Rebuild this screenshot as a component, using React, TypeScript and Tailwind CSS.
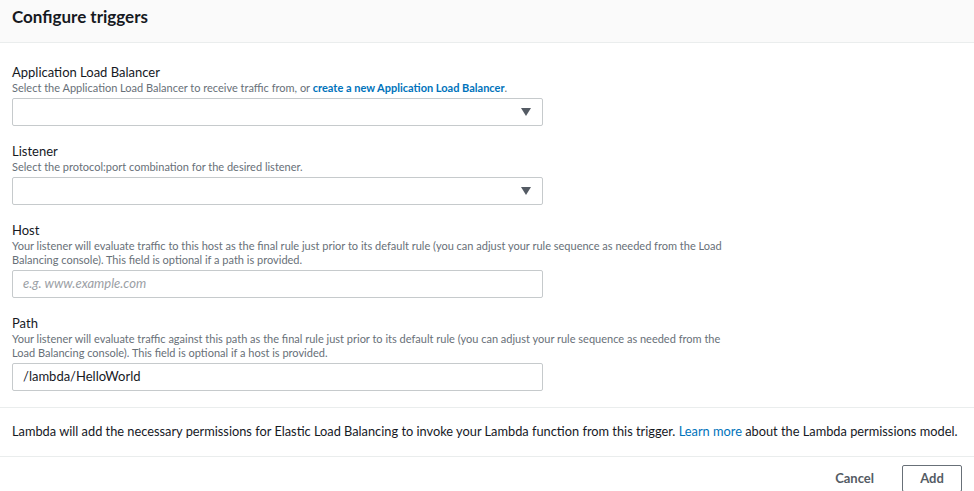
import React from 'react';

const font = { fontFamily: 'Lato, "Open Sans", "Liberation Sans", sans-serif' };

function Caret() {
  return (
    <svg width="10" height="8" viewBox="0 0 10 8" className="fill-[#545b64]">
      <path d="M0 0 L10 0 L5 8 Z" />
    </svg>
  );
}

function Field({
  label,
  children,
  desc,
}: {
  label: string;
  desc: React.ReactNode;
  children: React.ReactNode;
}) {
  return (
    <div className="flex flex-col">
      <div className="text-[13px] leading-[17px] text-[#16191f]">{label}</div>
      <div className="text-[11px] leading-[14px] text-[#687078] max-w-[712px]">{desc}</div>
      <div className="mt-[3px]">{children}</div>
    </div>
  );
}

function SelectBox() {
  return (
    <div className="w-[531px] h-[28px] border border-[#c6cacc] rounded-[2px] bg-white flex items-center justify-end pr-[11px]">
      <Caret />
    </div>
  );
}

function TextBox({ value, placeholder }: { value?: string; placeholder?: string }) {
  return (
    <div className="w-[531px] h-[28px] border border-[#c6cacc] rounded-[2px] bg-white flex items-center px-[10px] text-[13px]">
      {value ? (
        <span className="text-[#16191f]">{value}</span>
      ) : (
        <span className="italic text-[#9ba0a5]">{placeholder}</span>
      )}
    </div>
  );
}

export default function App() {
  return (
    <div style={font} className="w-[974px] h-[491px] bg-white flex flex-col overflow-hidden">
      <div className="shrink-0 h-[43px] bg-[#fafafa] border-b border-[#eaeded] px-[12px] pt-[6px]">
        <h2 className="text-[17px] leading-[21px] font-bold text-[#16191f]">Configure triggers</h2>
      </div>

      <div className="shrink-0 flex flex-col gap-[17px] px-[12px] pt-[21px] pb-[16px]">
        <Field
          label="Application Load Balancer"
          desc={
            <>
              Select the Application Load Balancer to receive traffic from, or{' '}
              <span className="font-bold text-[#0073bb]">create a new Application Load Balancer</span>.
            </>
          }
        >
          <SelectBox />
        </Field>
        <Field label="Listener" desc="Select the protocol:port combination for the desired listener.">
          <SelectBox />
        </Field>
        <Field
          label="Host"
          desc="Your listener will evaluate traffic to this host as the final rule just prior to its default rule (you can adjust your rule sequence as needed from the Load Balancing console). This field is optional if a path is provided."
        >
          <TextBox placeholder="e.g. www.example.com" />
        </Field>
        <Field
          label="Path"
          desc="Your listener will evaluate traffic against this path as the final rule just prior to its default rule (you can adjust your rule sequence as needed from the Load Balancing console). This field is optional if a host is provided."
        >
          <TextBox value="/lambda/HelloWorld" />
        </Field>
      </div>

      <div className="shrink-0 border-t border-[#eaeded] h-[49px] flex items-center px-[12px] text-[12.8px] text-[#16191f]">
        <p className="whitespace-nowrap">
          Lambda will add the necessary permissions for Elastic Load Balancing to invoke your Lambda function from this
          trigger. <span className="text-[#0073bb]">Learn more</span> about the Lambda permissions model.
        </p>
      </div>

      <div className="shrink-0 border-t border-[#eaeded] flex justify-end items-center gap-[18px] pr-[12px] pt-[8px]">
        <button className="text-[13px] font-bold text-[#545b64] px-[10px] h-[27px]">Cancel</button>
        <button className="text-[13px] font-bold text-[#545b64] w-[60px] h-[27px] border border-[#687078] rounded-[2px] bg-white">
          Add
        </button>
      </div>
    </div>
  );
}
